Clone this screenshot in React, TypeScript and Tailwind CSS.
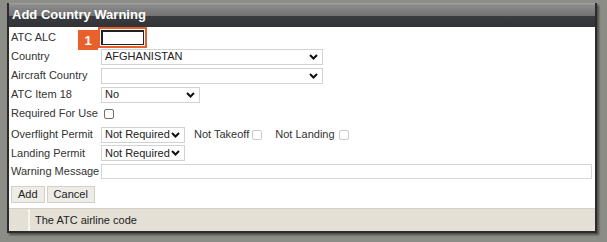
import React from "react";

const font = { fontFamily: '"Liberation Sans", Arial, sans-serif' };

function Chevron() {
  return (
    <svg
      width="9"
      height="6"
      viewBox="0 0 9 6"
      className="pointer-events-none absolute right-[4px] top-1/2 -translate-y-1/2"
    >
      <path d="M1 1l3.5 3.5L8 1" fill="none" stroke="#111" strokeWidth="2" />
    </svg>
  );
}

function Select({ value, className }: { value: string; className: string }) {
  return (
    <div
      className={
        "relative flex h-[16px] items-center border border-[#d2d2d2] bg-white pl-[3px] text-[11px] text-[#222] " +
        className
      }
    >
      <span className="leading-none">{value}</span>
      <Chevron />
    </div>
  );
}

function Row({
  label,
  children,
  className = "h-[19px]",
}: {
  label: string;
  children?: React.ReactNode;
  className?: string;
}) {
  return (
    <div className={"flex items-center " + className}>
      <div className="w-[90px] text-[11px] leading-none text-[#333]">{label}</div>
      <div className="flex items-center">{children}</div>
    </div>
  );
}

function Checkbox({ disabled }: { disabled?: boolean }) {
  return (
    <span
      className={
        "inline-block h-[10px] w-[10px] rounded-[2px] border bg-white " +
        (disabled ? "border-[#cbcbcb]" : "border-[#6f6f6f]")
      }
    />
  );
}

export default function App() {
  return (
    <div className="h-[242px] w-[607px] bg-[#8d8d87] pt-[3px]" style={font}>
      <div className="ml-[7px] flex w-[590px] flex-col border-x-2 border-b-2 border-[#2b2b2b] bg-white shadow-[2px_2px_2px_rgba(0,0,0,0.45)]">
        <div className="flex h-[24px] items-center bg-[linear-gradient(#a3a3a3,#8a8a8a_10%,#727272_54%,#3a3c3f_55%,#313336)] pl-[3px] text-[13px] font-bold text-white">
          Add Country Warning
        </div>

        <div className="flex flex-col pl-[2px] pt-[1px] pb-[5px]">
          <Row label="ATC ALC">
            <div className="relative -ml-[3px] border-2 border-[#e8602c] p-[1px]">
              <span className="absolute right-[calc(100%+2px)] top-[1px] flex h-[20px] w-[20px] items-center justify-center bg-[#e8602c] text-[13px] font-bold leading-none text-white">
                1
              </span>
              <div className="h-[15px] w-[43px] border border-l-2 border-t-2 border-[#222] bg-white" />
            </div>
          </Row>
          <Row label="Country">
            <Select value="AFGHANISTAN" className="w-[222px]" />
          </Row>
          <Row label="Aircraft Country">
            <Select value="" className="w-[222px]" />
          </Row>
          <Row label="ATC Item 18">
            <Select value="No" className="w-[99px]" />
          </Row>
          <Row label="Required For Use">
            <span className="ml-[3px] flex">
              <Checkbox />
            </span>
          </Row>
          <Row label="Overflight Permit" className="mt-[2px] h-[19px]">
            <Select value="Not Required" className="w-[84px]" />
            <span className="ml-[9px] text-[11px] leading-none text-[#333]">Not Takeoff</span>
            <span className="ml-[3px] flex">
              <Checkbox disabled />
            </span>
            <span className="ml-[13px] text-[11px] leading-none text-[#333]">Not Landing</span>
            <span className="ml-[4px] flex">
              <Checkbox disabled />
            </span>
          </Row>
          <Row label="Landing Permit" className="h-[18px]">
            <Select value="Not Required" className="w-[84px]" />
          </Row>
          <div className="flex h-[19px] items-center">
            <div className="w-[90px] text-[11px] leading-none text-[#333]">Warning Message</div>
            <input
              className="h-[15px] w-[491px] border border-[#d6d6d6] bg-white outline-none"
              defaultValue=""
            />
          </div>
          <div className="mt-[5px] flex gap-[2px]">
            <button className="h-[17px] border border-[#d3d0c8] bg-[#eeece7] px-[6px] text-[11px] leading-none text-[#222]">
              Add
            </button>
            <button className="h-[17px] border border-[#d3d0c8] bg-[#eeece7] px-[6px] text-[11px] leading-none text-[#222]">
              Cancel
            </button>
          </div>
        </div>

        <div className="flex h-[23px] border-t border-[#d4d0c6] bg-[#e4e0d6]">
          <div className="w-[21px] border-r-2 border-[#f6f4ee]" />
          <div className="flex items-center pl-[5px] text-[11px] leading-none text-[#222]">
            The ATC airline code
          </div>
        </div>
      </div>
    </div>
  );
}
